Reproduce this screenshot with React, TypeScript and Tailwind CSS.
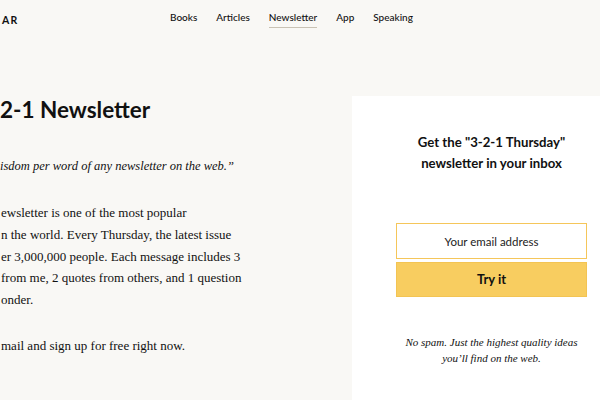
const navItems = ['Books', 'Articles', 'Newsletter', 'App', 'Speaking']

// the page is scrolled sideways in the shot, so only the visible tail of each line is kept
const bodyLines = [
    'ewsletter is one of the most popular',
    'n the world. Every Thursday, the latest issue',
    'er 3,000,000 people. Each message includes 3',
    'from me, 2 quotes from others, and 1 question',
    'onder.',
]

function Header() {
    return (
        <header className="flex h-[35px] items-center font-['Lato',sans-serif] text-[#111]">
            <div className="w-[170px] shrink-0 pl-[2px]">
                <span className="whitespace-nowrap text-[10.5px] font-bold tracking-[0.12em]">AR</span>
            </div>
            <nav className="flex gap-[19px] text-[10px] font-medium">
                {navItems.map((item) => (
                    <a
                        key={item}
                        className={
                            item === 'Newsletter'
                                ? 'border-b border-[#c9c2b4] pb-[2px] pt-[3px]'
                                : 'pb-[2px] pt-[3px]'
                        }
                    >
                        {item}
                    </a>
                ))}
            </nav>
        </header>
    )
}

function Intro() {
    return (
        <div className="w-[352px] shrink-0 text-[#111]">
            <h1 className="whitespace-nowrap font-['Lato',sans-serif] text-[22.5px] font-bold leading-[28px]">
                2-1 Newsletter
            </h1>
            <p className="mt-[32px] whitespace-nowrap font-['Liberation_Serif',serif] text-[12.5px] italic leading-[20px]">
                isdom per word of any newsletter on the web.”
            </p>
            <p className="mt-[26px] font-['Liberation_Serif',serif] text-[13px] leading-[21.8px]">
                {bodyLines.map((line) => (
                    <span key={line} className="block whitespace-nowrap pl-[1px]">
                        {line}
                    </span>
                ))}
            </p>
            <p className="mt-[24.4px] whitespace-nowrap pl-[1px] font-['Liberation_Serif',serif] text-[13px] leading-[21.6px]">
                mail and sign up for free right now.
            </p>
        </div>
    )
}

function SignupPanel() {
    return (
        <div className="w-[248px] shrink-0 bg-white pl-[44px] pt-[36px] pb-10 text-[#111]">
            <div className="w-[191px]">
                <h2 className="whitespace-nowrap text-center font-['Lato',sans-serif] text-[13.2px] font-bold leading-[21px]">
                    Get the "3-2-1 Thursday"
                    <br />
                    newsletter in your inbox
                </h2>
                <input
                    className="mt-[49px] block h-[36px] w-full border border-[#f5c65a] bg-white text-center font-['Lato',sans-serif] text-[11.5px] text-[#222] outline-none placeholder:text-[#222]"
                    placeholder="Your email address"
                />
                <button className="mt-[3px] block h-[35px] w-full border border-[#f3c453] bg-[#f8cd60] font-['Lato',sans-serif] text-[13px] font-bold text-[#111]">
                    Try it
                </button>
                <p className="mt-[37px] whitespace-nowrap text-center font-['Liberation_Serif',serif] text-[11px] italic leading-[16px]">
                    No spam. Just the highest quality ideas
                    <br />
                    you’ll find on the web.
                </p>
            </div>
        </div>
    )
}

export default function App() {
    return (
        <div className="h-[400px] w-[600px] overflow-hidden bg-[#f9f8f5]">
            <Header />
            <main className="mt-[61px] flex items-start">
                <Intro />
                <SignupPanel />
            </main>
        </div>
    )
}
